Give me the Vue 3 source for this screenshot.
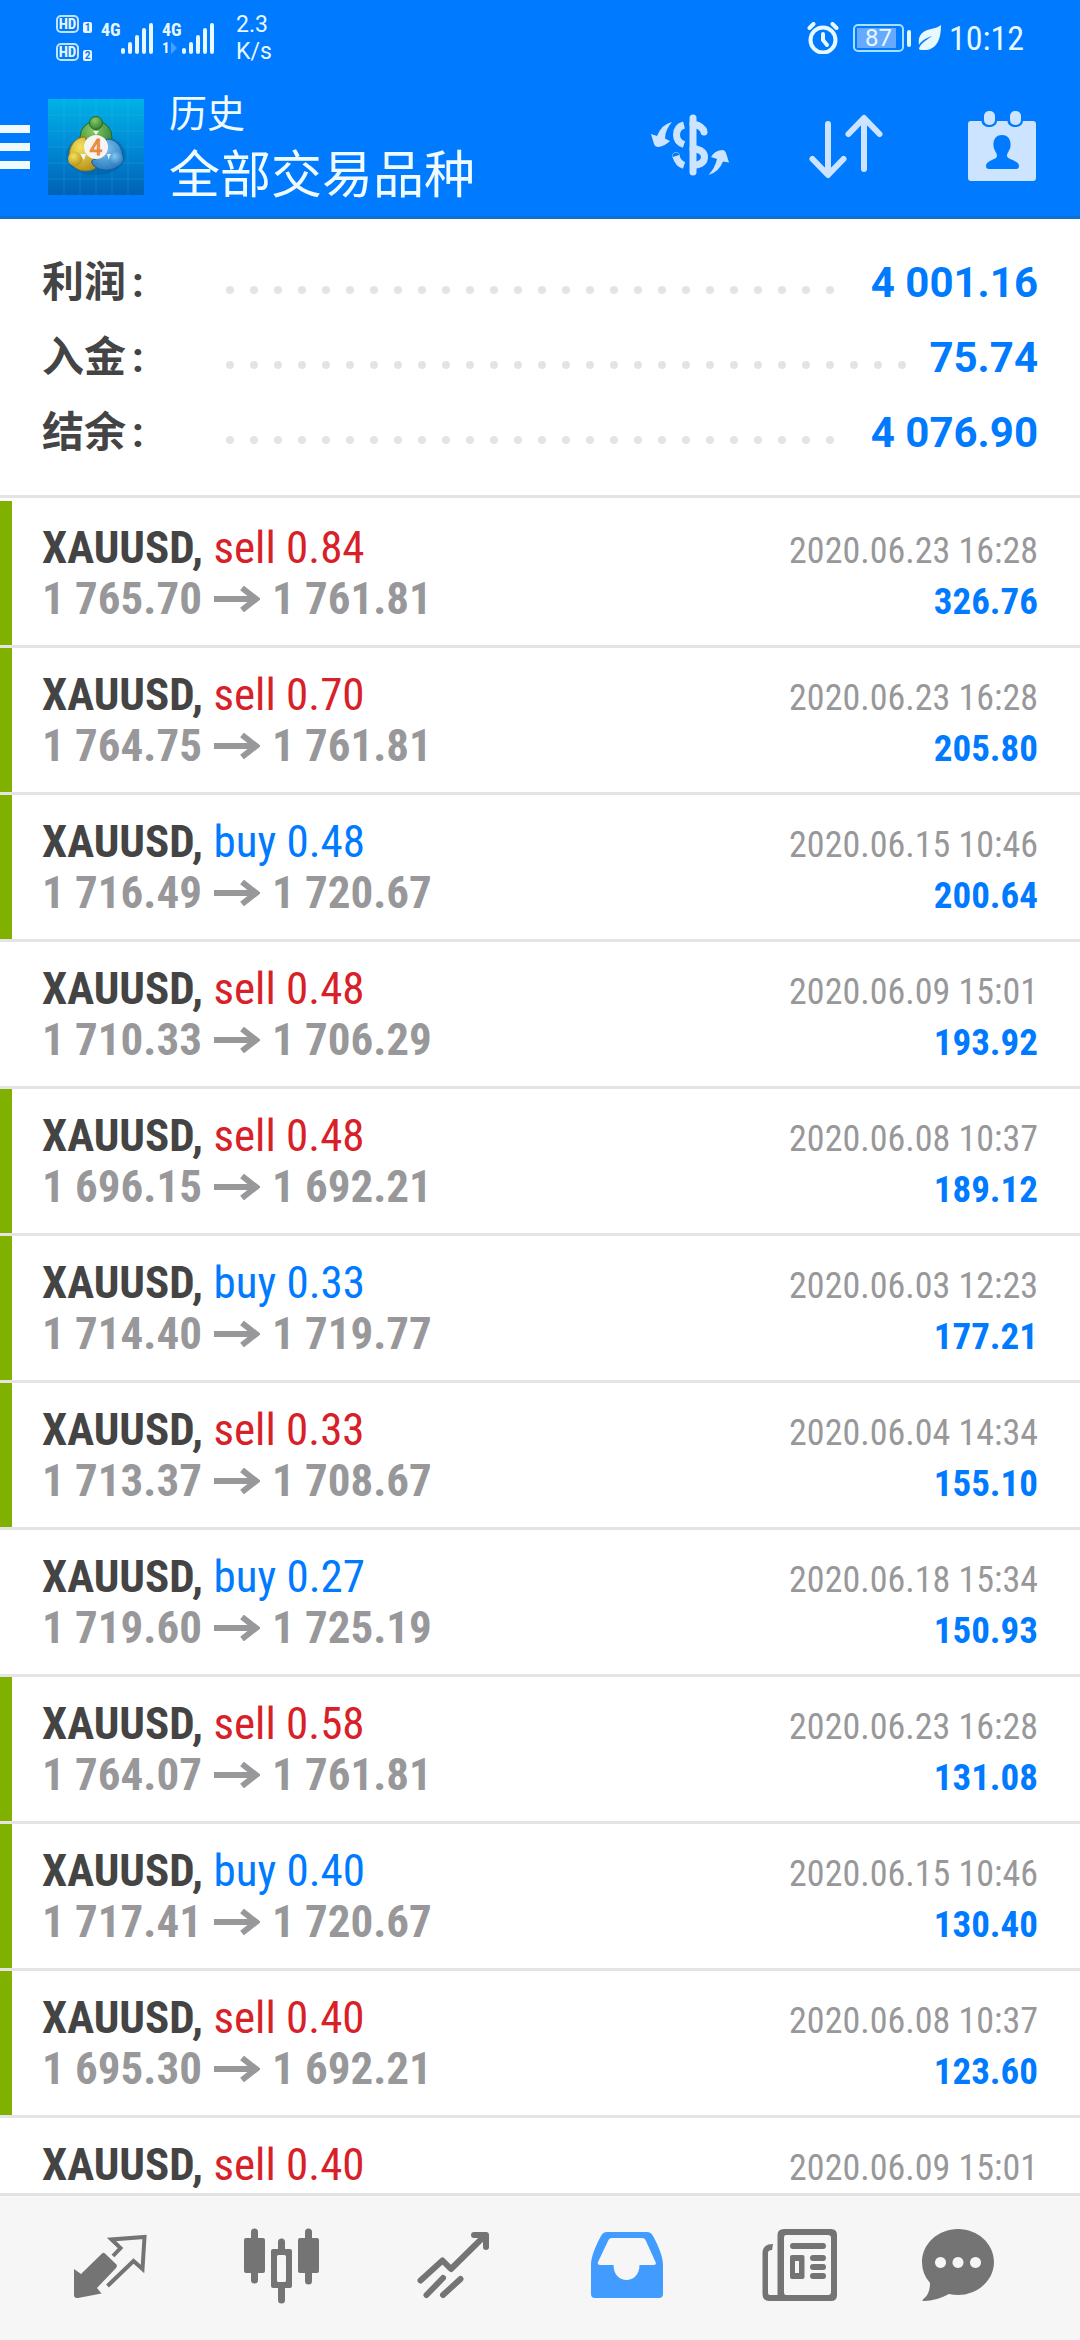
<script setup>
import { ref } from 'vue'

const summary = [
  { label: '利润', value: '4 001.16' },
  { label: '入金', value: '75.74' },
  { label: '结余', value: '4 076.90' },
]

// marked: closed by take profit, gets the green stripe
const deals = [
  { side: 'sell', volume: '0.84', open: '1 765.70', close: '1 761.81', time: '2020.06.23 16:28', profit: '326.76', marked: true },
  { side: 'sell', volume: '0.70', open: '1 764.75', close: '1 761.81', time: '2020.06.23 16:28', profit: '205.80', marked: true },
  { side: 'buy', volume: '0.48', open: '1 716.49', close: '1 720.67', time: '2020.06.15 10:46', profit: '200.64', marked: true },
  { side: 'sell', volume: '0.48', open: '1 710.33', close: '1 706.29', time: '2020.06.09 15:01', profit: '193.92', marked: false },
  { side: 'sell', volume: '0.48', open: '1 696.15', close: '1 692.21', time: '2020.06.08 10:37', profit: '189.12', marked: true },
  { side: 'buy', volume: '0.33', open: '1 714.40', close: '1 719.77', time: '2020.06.03 12:23', profit: '177.21', marked: true },
  { side: 'sell', volume: '0.33', open: '1 713.37', close: '1 708.67', time: '2020.06.04 14:34', profit: '155.10', marked: true },
  { side: 'buy', volume: '0.27', open: '1 719.60', close: '1 725.19', time: '2020.06.18 15:34', profit: '150.93', marked: false },
  { side: 'sell', volume: '0.58', open: '1 764.07', close: '1 761.81', time: '2020.06.23 16:28', profit: '131.08', marked: true },
  { side: 'buy', volume: '0.40', open: '1 717.41', close: '1 720.67', time: '2020.06.15 10:46', profit: '130.40', marked: true },
  { side: 'sell', volume: '0.40', open: '1 695.30', close: '1 692.21', time: '2020.06.08 10:37', profit: '123.60', marked: true },
  { side: 'sell', volume: '0.40', open: '', close: '', time: '2020.06.09 15:01', profit: '', marked: false },
]

const tabs = ['quotes', 'charts', 'trade', 'history', 'news', 'messages']
const activeTab = ref('history')
</script>

<template>
  <div class="page">
    <div class="status">
      <div class="hd-list">
        <div class="hd"><span class="hd-box">HD</span><span class="hd-num">1</span></div>
        <div class="hd"><span class="hd-box">HD</span><span class="hd-num">2</span></div>
      </div>
      <div class="signal">
        <div class="net"><span>4G</span></div>
        <svg width="32" height="32" viewBox="0 0 32 32">
          <path d="M2 28v2M9 22v8M16 15v15M23 8v22M30 3v27" />
        </svg>
      </div>
      <div class="signal">
        <div class="net">
          <span>4G</span>
          <span class="slot">1<svg width="6" height="12" viewBox="0 0 6 12"><path d="M0 0L6 6L0 12Z" /></svg></span>
        </div>
        <svg width="32" height="32" viewBox="0 0 32 32">
          <path d="M2 28v2M9 22v8M16 15v15M23 8v22M30 3v27" />
        </svg>
      </div>
      <div class="speed"><span>2.3</span><span>K/s</span></div>
      <div class="status-right">
        <svg class="alarm" width="32" height="32" viewBox="0 0 32 32">
          <circle cx="16" cy="18" r="12.500" />
          <path d="M16 12v6l4 5M2.500 6l4-4M29.500 6l-4-4" />
        </svg>
        <span class="battery"><span class="level">87</span></span>
        <svg class="leaf" width="24" height="26" viewBox="0 0 24 26">
          <path d="M23 0C23 12 20 24 8 25C4 25 1 25 1 24C2 19 7 16 14 11C8 13 3 16 1 20C-1 8 8 5 13 4C17 3 21 2 23 0Z" />
        </svg>
        <span class="clock">10:12</span>
      </div>
    </div>

    <header class="header">
      <button class="menu" type="button" aria-label="菜单">
        <span class="bars"><i /><i /><i /></span>
        <svg width="96" height="96" viewBox="0 0 96 96">
          <defs>
            <linearGradient id="tile" x1="0" y1="0" x2="0" y2="1">
              <stop offset="0" stop-color="#00b2e4" />
              <stop offset="0.5" stop-color="#008ad6" />
              <stop offset="1" stop-color="#0062b4" />
            </linearGradient>
            <radialGradient id="green" cx="0.4" cy="0.3" r="0.8">
              <stop offset="0" stop-color="#8cc860" /><stop offset="1" stop-color="#237a35" />
            </radialGradient>
            <radialGradient id="gold" cx="0.4" cy="0.3" r="0.8">
              <stop offset="0" stop-color="#f4e25e" /><stop offset="1" stop-color="#b08a14" />
            </radialGradient>
            <radialGradient id="sky" cx="0.4" cy="0.3" r="0.8">
              <stop offset="0" stop-color="#84c8f2" /><stop offset="1" stop-color="#1e70b8" />
            </radialGradient>
          </defs>
          <rect width="96" height="96" fill="url(#tile)" />
          <path d="M16 0v96M32 0v96M48 0v96M64 0v96M80 0v96M0 16h96M0 32h96M0 48h96M0 64h96M0 80h96" stroke="#5fd0f5" stroke-opacity="0.16" />
          <ellipse cx="48" cy="56" rx="30" ry="20" fill="#00446f" opacity="0.25" />
          <circle cx="48" cy="38" r="16" fill="url(#green)" stroke="#1d6a2c" />
          <path d="M37 38C27 38 21 47 21 58C22 70 36 75 46 70C52 66 50 60 44 58Z" fill="url(#gold)" stroke="#957512" />
          <path d="M59 40C70 40 75 50 75 60C73 71 55 75 46 67C42 63 44 60 48 60Z" fill="url(#sky)" stroke="#14599a" />
          <path d="M45 32h6l-3 4zM32 55h6l-2 6zM59 55h6l-4 6z" fill="#eef8ee" />
          <circle cx="48" cy="24" r="6.500" fill="url(#green)" stroke="#1d6a2c" />
          <circle cx="27" cy="60" r="7" fill="url(#gold)" />
          <circle cx="68" cy="60" r="7" fill="url(#sky)" />
          <circle cx="48" cy="48" r="12" fill="#f7f4f2" />
          <text x="48" y="56" text-anchor="middle" class="logo-text">4</text>
        </svg>
      </button>
      <div class="titles">
        <span class="screen">历史</span>
        <h1>全部交易品种</h1>
      </div>
      <div class="actions">
        <button type="button" aria-label="货币">
          <svg width="96" height="96" viewBox="0 0 96 96">
            <g class="solid">
              <path d="M9 35L15 37Q20 25 30 23Q23 31 23 39.500L28 42Q23 47 16.500 48Q13 48 12 45Z" />
              <path d="M69 58Q72 52 80 51Q83 51 84 54L87 63.500L81 62.500Q77 73 66.500 76Q73 69 75 60Z" />
            </g>
            <g class="line thick">
              <path d="M42 26Q34.500 28 34.500 36Q34.500 43 42 45.500" class="butt" />
              <path d="M42 66.500Q36 64.500 34 57" class="butt" />
              <circle cx="34" cy="57" r="0.200" />
              <path d="M51 19v54" />
              <path d="M51 25Q61 27 62 33" />
              <path d="M51 49.500Q62.500 51 62.500 58Q62.500 65 52 66.500" />
            </g>
          </svg>
        </button>
        <button type="button" aria-label="排序">
          <svg width="96" height="96" viewBox="0 0 96 96">
            <g class="line">
              <path d="M30 25v50M14.500 60L30 76L45.500 60" />
              <path d="M66 70V20M50.500 35L66 19L81.500 35" />
            </g>
          </svg>
        </button>
        <button type="button" aria-label="时段">
          <svg width="96" height="96" viewBox="0 0 96 96">
            <path class="solid" fill-rule="evenodd" d="M17 22H27.500C28 30 42.500 30 43 22H53.500C54 30 68.500 30 69 22H79Q82 22 82 25V79Q82 82 79 82H17Q14 82 14 79V25Q14 22 17 22ZM48 36C41 36 39 42 39.500 47C40 52 43 53 43 57C43 61 32 61 32 67Q32 70 35 70H62Q65 70 65 67C65 61 53 61 53 57C53 53 56 52 56.500 47C57 42 55 36 48 36Z" />
            <rect class="solid" x="30" y="12" width="11" height="14" rx="5" />
            <rect class="solid" x="56" y="12" width="11" height="14" rx="5" />
          </svg>
        </button>
      </div>
    </header>

    <section class="summary">
      <div v-for="item in summary" :key="item.label" class="total">
        <span class="total-label"><span>{{ item.label }}</span><span>:</span></span>
        <span class="leader"><i v-for="n in 60" :key="n" /></span>
        <span class="total-value">{{ item.value }}</span>
      </div>
    </section>

    <ul class="deals">
      <li v-for="(deal, i) in deals" :key="i" class="deal" :class="{ marked: deal.marked }">
        <div class="row">
          <span class="symbol">XAUUSD, <span :class="deal.side">{{ deal.side }} {{ deal.volume }}</span></span>
          <span class="time">{{ deal.time }}</span>
        </div>
        <div v-if="deal.open" class="row">
          <span class="prices">
            {{ deal.open }}
            <svg width="46" height="26" viewBox="0 0 46 26"><path d="M0 13h43M28 2l14 11l-14 11" /></svg>
            {{ deal.close }}
          </span>
          <span class="profit">{{ deal.profit }}</span>
        </div>
      </li>
    </ul>

    <nav class="tabs">
      <button
        v-for="tab in tabs"
        :key="tab"
        type="button"
        class="tab"
        :class="{ active: tab === activeTab }"
        :aria-label="tab"
        @click="activeTab = tab"
      >
        <svg width="96" height="96" viewBox="0 0 96 96">
          <template v-if="tab === 'quotes'">
            <path class="solid" d="M12 49L19 54L40 33.500Q41.500 32 43 33.500L54.500 44.500Q55.500 46.500 54 48L35 68L39.500 73.500L16 78Q12 78.500 12 75Z" />
            <path class="line thin" d="M51 36L58.500 28L49.500 19.500L82.500 17L80.500 49L71.500 41L45.500 66" />
          </template>
          <template v-else-if="tab === 'charts'">
            <rect class="solid" x="10" y="18" width="21" height="35" rx="2" />
            <rect class="solid" x="64" y="18" width="21" height="35" rx="2" />
            <path class="line wick" d="M20.500 12v48M74.500 12v49M47.500 22v8M47.500 66v14" />
            <path class="solid" fill-rule="evenodd" d="M39 29H56Q58 29 58 31V66Q58 68 56 68H39Q37 68 37 66V31Q37 29 39 29ZM44.500 35Q43 35 43 36.500V60.500Q43 62 44.500 62H50.500Q52 62 52 60.500V36.500Q52 35 50.500 35Z" />
          </template>
          <template v-else-if="tab === 'trade'">
            <path class="line" d="M14.500 60.500L36.500 40.500L45 49L79 15.500M68 15H80V27M20.500 75L37 58M37 75L54.500 59" />
          </template>
          <template v-else-if="tab === 'history'">
            <path class="solid" fill-rule="evenodd" d="M29 12H69Q73 12 75 16C81 27 85 37 85 45V74Q85 78 81 78H17Q13 78 13 74V45C13 37 17 27 23 16Q25 12 29 12ZM34 18Q31 18 30 21L20 42Q19 45 22 45H35.500C35.500 65 61.500 65 61.500 45H75Q79 45 77.500 42L68 21Q67 18 64 18Z" />
          </template>
          <template v-else-if="tab === 'news'">
            <path class="solid" fill-rule="evenodd" d="M34 9H81Q87 9 87 15V75Q87 81 81 81H19Q12.500 81 12.500 74V33Q12.500 24 23 24L22 30Q18 30 18 33V73Q18 75 20 75H27.500V15Q27.500 9 34 9ZM36 15Q34 15 34 18V72Q34 75 36 75H78Q81 75 81 72V18Q81 15 78 15Z" />
            <path class="line" d="M43 26H73M63 38H73M63 47H73M63 56H73" />
            <path class="solid" fill-rule="evenodd" d="M42 35H52.500Q54.500 35 54.500 37V57Q54.500 59 52.500 59H42Q40 59 40 57V37Q40 35 42 35ZM45 41V53H49V41Z" />
          </template>
          <template v-else>
            <path class="solid" fill-rule="evenodd" d="M36 9C56 9 72 24 72 42S56 75 36 75Q31 75 27 74Q14 81 2 81Q-1 81 2 78.500Q8 74 8 63Q0 54 0 42C0 24 16 9 36 9ZM18.500 37a5.500 5.500 0 1 0 0.010 0ZM36 37a5.500 5.500 0 1 0 0.010 0ZM53.500 37a5.500 5.500 0 1 0 0.010 0Z" />
          </template>
        </svg>
      </button>
    </nav>
  </div>
</template>

<style>
body {
  margin: 0;
}
</style>

<style scoped>
.page {
  display: flex;
  flex-direction: column;
  height: 100vh;
  overflow: hidden;
  background: #fff;
  color: #444;
  font-family: Roboto, 'Noto Sans CJK SC', sans-serif;
}

button {
  padding: 0;
  border: 0;
  background: none;
  cursor: pointer;
}

svg {
  display: block;
}

.status,
.header {
  background: #007aff;
  color: #e8f8ff;
}

.status {
  display: flex;
  align-items: center;
  flex: none;
  height: 75px;
  padding: 0 56px;
  box-sizing: border-box;
}

.hd-list {
  display: grid;
  gap: 10px;
}

.hd {
  display: flex;
  align-items: flex-end;
  gap: 4px;
}

.hd-box {
  width: 23px;
  height: 18px;
  border: 2px solid #c4e2ff;
  border-radius: 5px;
  box-sizing: border-box;
  font-family: 'Roboto Condensed', Roboto, sans-serif;
  font-size: 15px;
  font-weight: 700;
  line-height: 14px;
  text-align: center;
}

.hd-num {
  width: 9px;
  height: 11px;
  border-radius: 2px;
  background: #e8f8ff;
  color: #007aff;
  font-size: 10px;
  font-weight: 700;
  line-height: 11px;
  text-align: center;
}

.signal {
  display: flex;
  align-items: flex-end;
  height: 32px;
  margin-left: 9px;
}

.signal > svg {
  fill: none;
  stroke: #e8f8ff;
  stroke-width: 4;
  stroke-linecap: round;
}

.net {
  display: grid;
  align-content: space-between;
  width: 20px;
  height: 32px;
  font-family: 'Roboto Condensed', Roboto, sans-serif;
  font-size: 18px;
  font-weight: 700;
  line-height: 16px;
}

.slot {
  display: flex;
  align-items: center;
  gap: 1px;
  font-size: 15px;
  line-height: 12px;
}

.slot svg {
  fill: #e8f8ff;
  opacity: 0.3;
}

.speed {
  display: grid;
  margin-left: 22px;
  font-size: 23px;
  line-height: 27px;
}

.status-right {
  display: flex;
  align-items: center;
  margin-left: auto;
}

.alarm {
  fill: none;
  stroke: #e8f8ff;
  stroke-width: 4;
  stroke-linecap: round;
}

.battery {
  position: relative;
  width: 51px;
  height: 28px;
  margin: 0 14px;
  padding: 3px;
  border: 2px solid #a8e0ff;
  border-radius: 5px;
  box-sizing: border-box;
  background: linear-gradient(#66aaff, #66aaff) 2px 2px / 39px 20px no-repeat;
}

.battery::after {
  content: '';
  position: absolute;
  top: 4px;
  right: -9px;
  width: 4px;
  height: 17px;
  border-radius: 2px;
  background: #e8f8ff;
}

.level {
  display: block;
  font-size: 24px;
  line-height: 18px;
  text-align: center;
}

.leaf {
  fill: #e8f8ff;
}

.clock {
  margin-left: 7px;
  font-family: 'Roboto Condensed', Roboto, sans-serif;
  font-size: 34px;
}

.header {
  display: flex;
  align-items: center;
  flex: none;
  height: 144px;
  box-shadow: inset 0 -3px #116fd0;
}

.menu {
  display: flex;
  align-items: center;
  gap: 18px;
}

.bars {
  display: grid;
  gap: 10px;
  width: 30px;
}

.bars i {
  height: 8px;
  background: #f0fbff;
}

.logo-text {
  fill: #f4a04a;
  stroke: #e8833a;
  font-family: Roboto, sans-serif;
  font-size: 22px;
}

.titles {
  flex: 1;
  margin-left: 25px;
  color: #f0fbff;
}

.screen {
  display: block;
  font-size: 38px;
  line-height: 58px;
}

h1 {
  margin: 0;
  font-size: 51px;
  font-weight: 400;
  line-height: 66px;
}

.actions {
  display: flex;
}

.actions button {
  display: flex;
  justify-content: center;
  width: 156px;
}

.actions .solid {
  fill: #cce4ff;
}

.line {
  fill: none;
  stroke-width: 6;
  stroke-linecap: round;
  stroke-linejoin: round;
}

.actions .line {
  stroke: #cce4ff;
}

.thick {
  stroke-width: 7;
}

.butt {
  stroke-linecap: butt;
}

.summary {
  flex: none;
  padding: 26px 42px 25px;
  border-bottom: 3px solid #e4e4e4;
}

.total {
  display: flex;
  align-items: center;
  height: 75px;
  font-size: 42px;
  font-weight: 700;
  line-height: 75px;
}

.total-label {
  display: flex;
  gap: 6px;
  width: 176px;
}

.leader {
  display: flex;
  flex: 1;
  flex-wrap: wrap;
  height: 8px;
  margin: 15px 12px 0 0;
  overflow: hidden;
}

.leader i {
  width: 8px;
  height: 8px;
  margin: 0 8px;
  border-radius: 50%;
  background: #e4e4e4;
}

.total-value {
  color: #007aff;
}

.deals {
  flex: 1;
  min-height: 0;
  margin: 0;
  padding: 3px 0 0;
  overflow: hidden;
  list-style: none;
  font-family: 'Roboto Condensed', Roboto, sans-serif;
}

.deal {
  padding: 21px 42px;
  border-bottom: 3px solid #e4e4e4;
}

.marked {
  box-shadow: inset 12px 0 #80b000;
}

.row {
  display: flex;
  align-items: baseline;
  justify-content: space-between;
  height: 51px;
  line-height: 51px;
}

.symbol,
.prices {
  font-size: 45px;
  font-weight: 700;
}

.sell,
.buy {
  font-weight: 400;
}

.sell {
  color: #d82028;
}

.buy {
  color: #007aff;
}

.prices {
  display: flex;
  align-items: center;
  gap: 12px;
}

.prices,
.time {
  color: #98989a;
}

.prices svg {
  fill: none;
  stroke: #98989a;
  stroke-width: 6;
}

.time {
  font-size: 36px;
}

.profit {
  color: #007aff;
  font-size: 37px;
  font-weight: 700;
}

.tabs {
  display: flex;
  flex: none;
  padding: 24px;
  border-top: 3px solid #e2e2e2;
  background: #f6f6f6;
}

.tab {
  display: flex;
  flex: 1;
  justify-content: center;
  color: #747474;
}

.tab.active {
  color: #429cff;
}

.tab .solid {
  fill: currentColor;
}

.tab .line {
  stroke: currentColor;
}

.tab .thin {
  stroke-width: 4;
  stroke-linecap: butt;
  stroke-linejoin: miter;
}

.tab .wick {
  stroke-width: 7;
}
</style>
